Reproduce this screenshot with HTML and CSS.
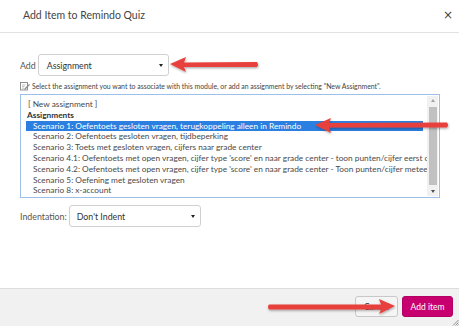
FILE: index.html
```html
<!DOCTYPE html>
<html>
<head>
<meta charset="utf-8">
<link rel="stylesheet" href="styles.css">
</head>
<body>
<div class="dialog">
  <div class="header">
    <span class="title">Add Item to Remindo Quiz</span>
    <span class="close">×</span>
  </div>
  <div class="content">
    <div class="row add-row">
      <span class="label">Add</span>
      <div class="select sel-add"><span>Assignment</span><i class="caret"></i></div>
    </div>
    <div class="hint">
      <svg class="hint-icon" width="10" height="10" viewBox="0 0 10 10">
        <rect x="0.5" y="1.5" width="7" height="7.5" fill="#fff" stroke="#777" stroke-width="0.8"/>
        <path d="M2 4h3.5M2 5.6h2.5M2 7.2h2" stroke="#999" stroke-width="0.6"/>
        <path d="M4.5 7.5l4.6-4.6 0.9 0.9-4.6 4.6-1.3 0.4z" fill="#888"/>
      </svg>
      <span>Select the assignment you want to associate with this module, or add an assignment by selecting "New Assignment".</span>
    </div>
    <div class="listbox">
      <div class="list">
        <div class="opt">[ New assignment ]</div>
        <div class="group">Assignments</div>
        <div class="opt sub selected">Scenario 1: Oefentoets gesloten vragen, terugkoppeling alleen in Remindo</div>
        <div class="opt sub">Scenario 2: Oefentoets gesloten vragen, tijdbeperking</div>
        <div class="opt sub">Scenario 3: Toets met gesloten vragen, cijfers naar grade center</div>
        <div class="opt sub">Scenario 4.1: Oefentoets met open vragen, cijfer type 'score' en naar grade center - toon punten/cijfer eerst op</div>
        <div class="opt sub">Scenario 4.2: Oefentoets met open vragen, cijfer type 'score' en naar grade center - Toon punten/cijfer meteen</div>
        <div class="opt sub">Scenario 5: Oefening met gesloten vragen</div>
        <div class="opt sub">Scenario 8: x-account</div>
      </div>
      <div class="scrollbar">
        <i class="sb-up"></i>
        <div class="thumb"></div>
        <i class="sb-down"></i>
      </div>
    </div>
    <div class="row indent-row">
      <span class="label">Indentation:</span>
      <div class="select sel-indent"><span>Don't Indent</span><i class="caret"></i></div>
    </div>
  </div>
  <div class="footer">
    <button class="btn cancel">Cancel</button>
    <button class="btn primary">Add item</button>
    <svg class="grip" width="7" height="7" viewBox="0 0 7 7"><path d="M6.5 1L1 6.5M6.5 3.5L3.5 6.5M6.5 5.5L5.5 6.5" stroke="#777" stroke-width="0.8"/></svg>
  </div>

  <svg class="arrow a1" width="95" height="20" viewBox="0 0 95 20">
    <path d="M1 9 L17 2 L15 7.5 L88 7 Q90 9.5 88 12 L15 12 L17 17 Z" fill="#e8403c" filter="url(#sh)"/>
    <defs><filter id="sh" x="-10%" y="-30%" width="130%" height="170%"><feDropShadow dx="0.5" dy="1.2" stdDeviation="0.8" flood-color="#000" flood-opacity="0.35"/></filter></defs>
  </svg>
  <svg class="arrow a2" width="138" height="20" viewBox="0 0 138 20">
    <path d="M1 8 L17 1 L15 6 L133 5.5 Q135 8 133 10.5 L15 10.5 L17 16 Z" fill="#e8403c" filter="url(#sh)"/>
  </svg>
  <svg class="arrow a3" width="135" height="22" viewBox="0 0 135 22">
    <path d="M129 8 L113 1 L115 6.5 L3 6.5 Q1 9 3 11.5 L115 11.5 L113 16 Z" fill="#e8403c" filter="url(#sh)"/>
  </svg>
</div>
</body>
</html>
```

FILE: styles.css
```css
* { box-sizing: border-box; }
html, body { margin: 0; padding: 0; }
body {
  width: 459px;
  height: 326px;
  background: #fff;
  font-family: Lato, "Open Sans", sans-serif;
  color: #444;
  overflow: hidden;
}
.dialog {
  position: relative;
  width: 459px;
  height: 326px;
  display: flex;
  flex-direction: column;
}
.header {
  height: 33px;
  flex: none;
  display: flex;
  align-items: center;
  justify-content: space-between;
  padding: 0 6px 2px 23px;
  border-bottom: 1px solid #e2e2e2;
}
.title {
  font-size: 10.5px;
  color: #444;
}
.close {
  font-size: 12px;
  color: #444;
  font-family: "DejaVu Sans", sans-serif;
}
.content {
  flex: 1;
  padding: 21px 19px 0 20px;
}
.row {
  display: flex;
  align-items: center;
}
.label {
  font-size: 8.8px;
  color: #555;
}
.select {
  position: relative;
  height: 22px;
  width: 131px;
  border: 1px solid #d0d0d0;
  border-radius: 3px;
  background: #fff;
  display: flex;
  align-items: center;
  font-size: 8.8px;
  color: #333;
}
.sel-add { margin-left: 2px; padding-left: 8px; }
.sel-indent { margin-left: 2px; width: 132px; padding-left: 7px; }
.caret {
  position: absolute;
  right: 5px;
  top: 9px;
  width: 0;
  height: 0;
  border-left: 2px solid transparent;
  border-right: 2px solid transparent;
  border-top: 3px solid #222;
}
.hint {
  display: flex;
  align-items: center;
  margin-top: 4px;
  height: 12px;
  font-size: 6.9px;
  color: #444;
  white-space: nowrap;
}
.hint-icon { margin-right: 2px; flex: none; }
.listbox {
  margin-top: 2px;
  width: 420px;
  height: 104px;
  border: 1px solid #9cc0ea;
  display: flex;
  background: #fff;
}
.list {
  flex: 1;
  min-width: 0;
  padding: 4px 4px 0 5px;
  overflow: hidden;
}
.opt, .group {
  height: 10.8px;
  line-height: 10.8px;
  font-size: 8.3px;
  white-space: nowrap;
  color: #4a4a4a;
}
.opt:first-child { padding-left: 2px; }
.group { font-weight: bold; color: #333; padding-left: 1px; }
.sub { padding-left: 7px; }
.selected {
  background: #2b7fe0;
  color: #fff;
}
.scrollbar {
  width: 11px;
  flex: none;
  background: #f1f1f1;
  display: flex;
  flex-direction: column;
  align-items: center;
  margin: 1px 1px 1px 0;
}
.sb-up, .sb-down {
  display: block;
  width: 0;
  height: 0;
  margin: 3px 0;
  border-left: 2.5px solid transparent;
  border-right: 2.5px solid transparent;
}
.sb-up { border-bottom: 3px solid #a3a3a3; }
.sb-down { border-top: 3px solid #505050; }
.thumb {
  flex: 1;
  width: 8px;
  background: #c1c1c1;
  margin: 2px 0;
}
.indent-row {
  margin-top: 7px;
}
.footer {
  flex: none;
  height: 38px;
  background: #f1f1f1;
  border-top: 1px solid #dcdcdc;
  display: flex;
  justify-content: flex-end;
  align-items: flex-start;
  padding: 7px 6px 0 0;
  position: relative;
}
.btn {
  height: 21px;
  border-radius: 3px;
  font-family: Lato, sans-serif;
  font-size: 8.5px;
  padding: 0;
}
.cancel {
  width: 43px;
  background: #f5f5f5;
  border: 1px solid #c8c8c8;
  color: #333;
  margin-right: 4px;
}
.primary {
  width: 51px;
  background: #c8006f;
  border: 1px solid #b30064;
  color: #fff;
}
.grip {
  position: absolute;
  right: 0;
  bottom: 0;
}
.arrow { position: absolute; }
.a1 { left: 169px; top: 55px; }
.a2 { left: 314px; top: 117px; }
.a3 { left: 266px; top: 298px; }
```
